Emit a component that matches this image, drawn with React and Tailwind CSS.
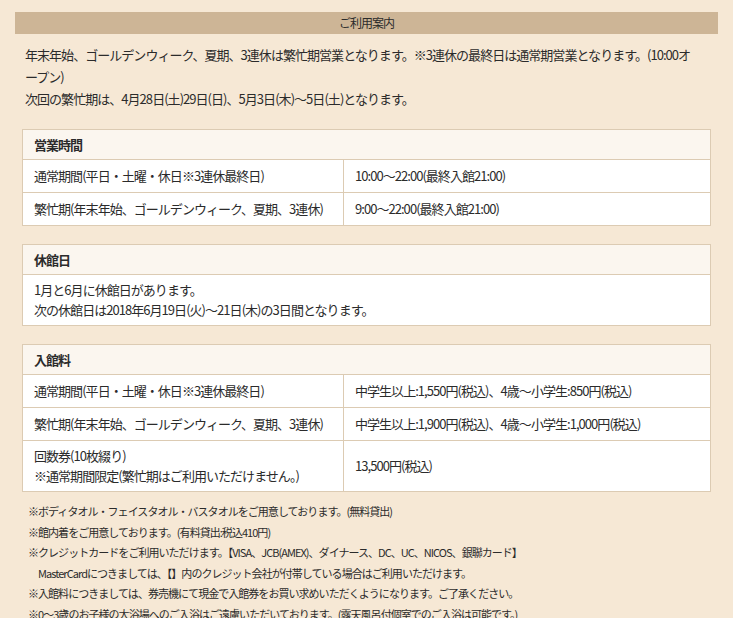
import React from 'react'

const font = { fontFamily: '"Noto Sans CJK JP", "Liberation Sans", sans-serif' }

const Table = ({ title, rows, children }) => (
    <div className='border border-[#dccbb3] bg-white'>
        <div className='h-[30px] flex items-center px-[11px] bg-[#fbf6ef] border-b border-[#dccbb3] text-[13px] font-bold'>{title}</div>
        {rows && rows.map((r, i) => (
            <div key={i} className={`flex text-[13px] ${i > 0 ? 'border-t border-[#dccbb3]' : ''}`}>
                <div className={`w-[321px] px-[11px] flex flex-col justify-center border-r border-[#dccbb3] whitespace-nowrap ${r.tall ? 'h-[50px] leading-[20px]' : 'h-[32px]'}`}>
                    {r.a.map((t, j) => <p key={j}>{t}</p>)}
                </div>
                <div className='flex-1 px-[11px] flex items-center whitespace-nowrap'>{r.b}</div>
            </div>
        ))}
        {children}
    </div>
)

const App = () => {
    const notes = [
        '※ボディタオル・フェイスタオル・バスタオルをご用意しております。(無料貸出)',
        '※館内着をご用意しております。(有料貸出:税込410円)',
        '※クレジットカードをご利用いただけます。【VISA、JCB(AMEX)、ダイナース、DC、UC、NICOS、銀聯カード】',
        '　MasterCardにつきましては、【】内のクレジット会社が付帯している場合はご利用いただけます。',
        '※入館料につきましては、券売機にて現金で入館券をお買い求めいただくようになります。ご了承ください。',
        '※0〜3歳のお子様の大浴場へのご入浴はご遠慮いただいております。(露天風呂付個室でのご入浴は可能です。)',
    ]
    return (
        <div style={font} className='w-[733px] h-[618px] overflow-hidden bg-[#f6e8d5] text-[#2b2b2b] pt-[12px] tracking-[-0.06em]'>
            <div className='mx-[15px] h-[22px] bg-[#cdb596] flex items-center justify-center text-[12px]'>ご利用案内</div>
            <div className='pl-[25px] pr-[40px] pt-[10px] text-[13px] leading-[22px]'>
                <p>年末年始、ゴールデンウィーク、夏期、3連休は繁忙期営業となります。※3連休の最終日は通常期営業となります。(10:00オープン)</p>
                <p>次回の繁忙期は、4月28日(土)29日(日)、5月3日(木)〜5日(土)となります。</p>
            </div>
            <div className='ml-[22px] mr-[22px] mt-[19px] flex flex-col gap-[18px]'>
                <Table title='営業時間' rows={[
                    { a: ['通常期間(平日・土曜・休日※3連休最終日)'], b: '10:00〜22:00(最終入館21:00)' },
                    { a: ['繁忙期(年末年始、ゴールデンウィーク、夏期、3連休)'], b: '9:00〜22:00(最終入館21:00)' },
                ]} />
                <Table title='休館日'>
                    <div className='px-[11px] py-[5px] text-[13px] leading-[20px]'>
                        <p>1月と6月に休館日があります。</p>
                        <p>次の休館日は2018年6月19日(火)〜21日(木)の3日間となります。</p>
                    </div>
                </Table>
                <Table title='入館料' rows={[
                    { a: ['通常期間(平日・土曜・休日※3連休最終日)'], b: '中学生以上:1,550円(税込)、4歳〜小学生:850円(税込)' },
                    { a: ['繁忙期(年末年始、ゴールデンウィーク、夏期、3連休)'], b: '中学生以上:1,900円(税込)、4歳〜小学生:1,000円(税込)' },
                    { a: ['回数券(10枚綴り)', '※通常期間限定(繁忙期はご利用いただけません。)'], b: '13,500円(税込)', tall: true },
                ]} />
            </div>
            <div className='px-[28px] pt-[9px] text-[11px] leading-[20.5px]'>
                {notes.map((n, i) => <p key={i}>{n}</p>)}
            </div>
        </div>
    )
}

export default App
